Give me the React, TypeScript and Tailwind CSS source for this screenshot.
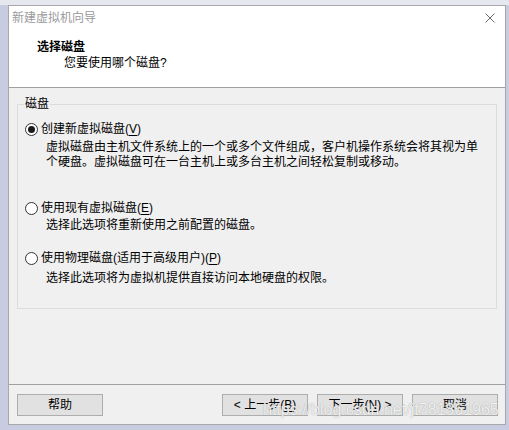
const font = "font-['Microsoft_YaHei','Liberation_Sans','Noto_Sans_CJK_SC',sans-serif]";

function Mnemonic({ k }: { k: string }) {
  return (
    <>
      (<span className="underline underline-offset-2">{k}</span>)
    </>
  );
}

function Radio({ checked }: { checked?: boolean }) {
  return (
    <span className="flex h-[13px] w-[13px] shrink-0 items-center justify-center rounded-full border border-[#333] bg-white">
      {checked && <span className="h-[7px] w-[7px] rounded-full bg-[#1a1a1a]" />}
    </span>
  );
}

function Button({ children }: { children: React.ReactNode }) {
  return (
    <button className="flex h-[22px] w-[86px] items-center justify-center border border-[#adadad] bg-[#e1e1e1] text-[12px] leading-[16px] text-black">
      {children}
    </button>
  );
}

export default function App() {
  return (
    <div className={`h-[430px] w-[509px] overflow-hidden bg-[#c7cce0] ${font}`}>
      <div className="h-[5px] bg-[#e6e8ef]" />
      <div className="relative ml-[8px] flex h-[420px] w-[498px] flex-col border border-[#a8a8a8] bg-[#f0f0f0]">
        {/* title bar + header */}
        <div className="border-b border-[#a0a0a0] bg-white">
          <div className="flex h-[24px] items-center justify-between pl-[3px] pr-[8px]">
            <span className="text-[12px] leading-[16px] text-[#9a9a9a]">新建虚拟机向导</span>
            <svg width="10" height="10" viewBox="0 0 10 10" className="mr-[2px]">
              <path d="M0.5 0.5 L9.5 9.5 M9.5 0.5 L0.5 9.5" stroke="#6b6b6b" strokeWidth="1" />
            </svg>
          </div>
          <div className="h-[57px] pt-[9px]">
            <div className="ml-[28px] text-[12px] font-bold leading-[16px] text-black">选择磁盘</div>
            <div className="ml-[55px] text-[12px] leading-[16px] text-black">您要使用哪个磁盘?</div>
          </div>
        </div>

        {/* body */}
        <div className="flex-1 px-[8px] pt-[8px]">
          <fieldset className="h-[213px] border border-[#dcdcdc] pb-0">
            <legend className="ml-[6px] px-[1px] text-[12px] leading-[16px] text-black">磁盘</legend>
            <div className="pt-[9px] text-[12px] text-black">
              <div className="flex items-center gap-[3px] pl-[7px] leading-[16px]">
                <Radio checked />
                <span>创建新虚拟磁盘<Mnemonic k="V" /></span>
              </div>
              <div className="mt-[3px] pl-[28px] leading-[15px]">
                虚拟磁盘由主机文件系统上的一个或多个文件组成，客户机操作系统会将其视为单
                <br />
                个硬盘。虚拟磁盘可在一台主机上或多台主机之间轻松复制或移动。
              </div>

              <div className="mt-[30px] flex items-center gap-[3px] pl-[7px] leading-[16px]">
                <Radio />
                <span>使用现有虚拟磁盘<Mnemonic k="E" /></span>
              </div>
              <div className="mt-[2px] pl-[28px] leading-[15px]">选择此选项将重新使用之前配置的磁盘。</div>

              <div className="mt-[17px] flex items-center gap-[3px] pl-[7px] leading-[16px]">
                <Radio />
                <span>使用物理磁盘(适用于高级用户)<Mnemonic k="P" /></span>
              </div>
              <div className="mt-[5px] pl-[28px] leading-[15px]">选择此选项将为虚拟机提供直接访问本地硬盘的权限。</div>
            </div>
          </fieldset>
        </div>

        {/* footer */}
        <div className="h-[40px] border-t border-[#a0a0a0]">
          <div className="flex items-center pl-[8px] pt-[9px]">
            <Button>帮助</Button>
            <div className="ml-[119px] flex gap-[9px]">
              <Button>&lt; 上一步<Mnemonic k="B" /></Button>
              <Button>下一步<Mnemonic k="N" /> &gt;</Button>
              <Button>取消</Button>
            </div>
          </div>
        </div>

        <div className="pointer-events-none absolute left-[254px] top-[395px] font-['Liberation_Sans',sans-serif] text-[16px] leading-[18px] text-white/85 [text-shadow:0_0_1px_#8a8a8a]">
          https://blog.csdn.net/jt781861965
        </div>
      </div>
    </div>
  );
}
